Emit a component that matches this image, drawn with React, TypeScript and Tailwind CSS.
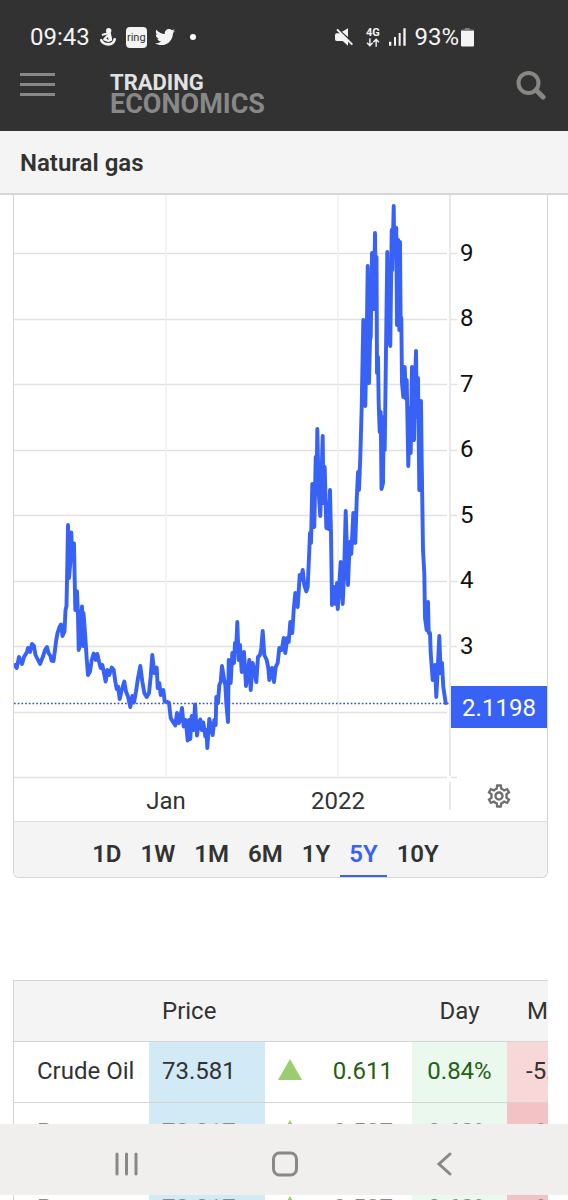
import { FaTwitter } from "react-icons/fa";
import { MdOutlineSettings } from "react-icons/md";

const priceTrace =
  "15,665 16.7,668 19,657 22,664 24,657 27,652 28,648 30,652 32,644 34,646 35.5,655 37.5,659 40,664 42,659 43.5,655 45,650 47,647 48.5,653 50.5,656 51.5,660.5 53.5,661 55,650 56,641.5 57.5,633 59.5,627 61,624.5 62.5,636 64.5,631.5 65.5,610 66.5,606 67.3,566 68,525 69,578 70.3,563 71.3,532.5 72.3,560 74,543.5 75.3,610 77,591.5 78,616 78.7,650 80,646 81,620 82,606.5 83.2,646 83.5,613 85.3,636.5 86.5,656 88,675 90,671.5 91.7,660 93.7,653.5 95.7,660 97.3,654 99,661.5 100.7,668 102.3,665 104,673 105.7,681.5 107.3,670 109.3,675 111.7,667.5 113.7,670 115.3,681.5 116.7,689 118,686.5 119.7,699 121.7,690 124.3,681.5 126,691.5 128,696.5 130.3,707 132.3,696 134,702.5 136,691.5 138,678 140.3,666 142.3,681.5 144.3,693 146.7,697 149,693 150.7,676.5 152.3,655 " +
  "154.3,673 156.7,667.5 157.7,688 159.3,683 160.7,695 163.3,690 164.7,701.5 167.3,702 169,703 170.7,718 172.7,721.5 175.3,725.5 177,713 179,723 180.3,718 182,708 183.7,726.5 185.7,720 187.7,740.5 189,720 190.3,739 191.7,716 193.7,730 195,704.5 197,735.5 198.7,723 200.3,719.5 201.7,730 203.3,722.5 205.3,736.5 206.3,730 207.3,748 209.3,719 211,727 212.7,735 214.3,720 215.7,725 216.3,697 218,703 219.3,685 220.7,682 222,666 223.7,677 225.3,685 226.3,703 228,722 228.7,660 230.7,683 232.3,653 234,663 235,643 236.3,645 237.3,622 238.7,660 240,645 241.7,672 244,652 246,686 247.7,673 249.3,660 250.7,690 252.7,663 254.7,672 256.3,682 258,657 260,655 261.3,648 262.7,631 264.3,655 266.7,660 268.3,668 269.3,680 272,668 274,682 275.7,667 277.7,663 279.3,648 281.7,650 283.7,638 285.3,653 287.3,638 288.7,642 290.3,622 292.3,633 293.7,610 295.3,593 297.7,607 299.7,575 301,580 302.7,570 304.3,585 " +
  "306.3,591.5 307.7,587 309,557 310,533 311,543 312.3,484 313.3,520 314.3,527 315.7,457 316.5,493 317.3,429 318.7,493 320.3,516 321.7,470 322.7,436 323.3,490 324,503 324.7,467 326.3,528 327.7,503 328.7,529 330,490 331,533 332,605 334,587 335.7,604 337,583 337.7,609 339,590 340.7,562 342.7,604 344,577 345.7,511 348,585 349.7,542 351.3,554 353.3,513 355.3,543 356.7,500 358,472 359,490 360.3,457 361.7,407 363.3,320 364.3,400 365.3,406 366.7,340 367.7,266 368.3,370 369,383 370,340 370.7,337 372,253 373.7,309 375,233 376,309 376.5,257 377,373 378,357 378.7,403 379.7,432 380.7,412 381.5,489 383,483 383.7,417 384.7,450 385.7,373 387.3,252 388.3,330 388.7,337 390.3,346 391.7,230 392.3,270 393.7,206 394.3,247 395,227 396,240 396.3,228 397,325 398.3,240 399.3,330 400,242 400.7,330 401.3,318 402,383 403.3,397 404.7,367 406,399 406.7,380 408.3,466 409.7,408 410.7,453 412,367 412.7,435 414,440 415,385 416,351 417,417 418,378 419.3,490 421,401 421.7,460 423,550 424.3,573 425,618 426.7,630 428,602 428.7,633 430,633 430.7,653 432.7,680 435,665 436.3,697 437.7,670 439.3,636 440.7,673 442,663 443.3,687 445.7,703";

const gridLines = [253, 319, 384, 450, 515, 581, 646, 712, 777];
const priceLabels = [
  { label: "9", y: 253 },
  { label: "8", y: 318 },
  { label: "7", y: 384 },
  { label: "6", y: 449 },
  { label: "5", y: 515 },
  { label: "4", y: 580 },
  { label: "3", y: 646 },
];
const ranges = ["1D", "1W", "1M", "6M", "1Y", "5Y", "10Y"];

function StatusBar() {
  return (
    <div className="flex h-[60px] items-end justify-between pr-[94px] pb-2 pl-[30px] text-2xl leading-[30px] text-[#f4f4f4]">
      <div className="flex items-center">
        <span>09:43</span>
        <svg viewBox="0 0 48 54" className="ml-[10px] h-[18px] w-4" fill="none" stroke="currentColor" strokeLinecap="round" strokeLinejoin="round" aria-hidden="true">
          <circle cx="26" cy="8" r="8" fill="currentColor" stroke="none" />
          <path d="M27 16q2 8 4 18" strokeWidth="11" />
          <path d="M24 16 8 20" strokeWidth="6" />
          <path d="M22 24 13 34l13 5" strokeWidth="7" />
          <path d="M4 37q5 12 21 12t19-15" strokeWidth="8" />
        </svg>
        <span className="ml-[10px] flex size-[21px] items-center justify-center rounded-[4px] bg-[#f4f4f4] text-[11px] leading-none text-[#323232]">ring</span>
        <FaTwitter className="ml-2 size-5" aria-hidden="true" />
        <span className="ml-[15px] size-[6px] rounded-full bg-white" />
      </div>
      <div className="flex items-center">
        <svg viewBox="0 0 54 54" className="size-[18px]" fill="currentColor" aria-hidden="true">
          <path d="M0 21q0-5 5-5h11l23 23v14L23 39H5q-5 0-5-5zM21 11 39 1v26z" />
          <path d="M6 4 52 50" stroke="currentColor" strokeWidth="6" />
        </svg>
        <span className="ml-3 flex w-[15px] flex-col items-center">
          <span className="text-[11px] leading-[10px] font-bold">4G</span>
          <svg viewBox="0 0 40 24" className="h-[9px] w-[14px]" fill="none" stroke="currentColor" strokeWidth="4" aria-hidden="true">
            <path d="M11 0v21M3 13l8 8 8-8M29 24V3M21 11l8-8 8 8" />
          </svg>
        </span>
        <svg viewBox="0 0 51 54" className="ml-[9px] h-[18px] w-[17px]" fill="currentColor" aria-hidden="true">
          <path d="M0 41h7v12H0zM15 27h6v26h-6zM29 15h6v38h-6zM43 1h7v52h-7z" />
        </svg>
        <span className="ml-2">93%</span>
        <svg viewBox="0 0 40 60" className="ml-[2px] h-5 w-[13px]" fill="currentColor" aria-hidden="true">
          <path d="M12 2h15v5h9q4 0 4 4H0q0-4 4-4h8z" opacity=".4" />
          <path d="M0 11h40v44q0 4-4 4H4q-4 0-4-4z" />
        </svg>
      </div>
    </div>
  );
}

function AppHeader() {
  return (
    <header className="shrink-0 bg-[#323232]">
      <StatusBar />
      <div className="flex h-[71px] items-start justify-between pr-[22px] pl-5">
        <div className="flex items-start">
          <button type="button" aria-label="Menu" className="mt-[13px] flex w-[35px] flex-col gap-[7px]">
            <span className="h-[3px] w-full bg-[#888]" />
            <span className="h-[3px] w-full bg-[#888]" />
            <span className="h-[3px] w-full bg-[#888]" />
          </button>
          <a href="#home" className="mt-3 ml-[55px] flex flex-col font-bold">
            <span className="text-[22px] leading-[22px] text-[#e2e2e2]">TRADING</span>
            <span className="text-[27px] leading-5 text-[#888]">ECONOMICS</span>
          </a>
        </div>
        <button type="button" aria-label="Search" className="mt-[10px] text-[#888883]">
          <svg viewBox="0 0 30 30" className="size-[30px]" fill="none" stroke="currentColor" aria-hidden="true">
            <circle cx="12.5" cy="13" r="10" strokeWidth="4" />
            <path d="m20 20 7 7" strokeWidth="5" strokeLinecap="round" />
          </svg>
        </button>
      </div>
    </header>
  );
}

function PriceChart() {
  return (
    <section className="mr-5 ml-[13px] shrink-0 rounded-b-md border-x border-b border-[#d4d4d4]">
      <div className="relative">
        <svg viewBox="14 195 533 626" className="block h-auto w-full" role="img" aria-label="Natural gas price, five years">
          <g stroke="#e1e1e1" strokeWidth="1.5">
            {gridLines.map((y) => (
              <path key={y} d={y === 712 ? `M14 ${y + 0.5}H447` : `M14 ${y + 0.5}H447M451 ${y + 0.5}H457`} />
            ))}
            <path d="M166 195V776M338 195V776" stroke="#efefef" />
            <path d="M450 195V776M450 782V810" />
          </g>
          <path d="M14 703.5H450" stroke="#2f52c4" strokeWidth="1.5" strokeDasharray="1.7 2" />
          <polyline points={priceTrace} fill="none" stroke="#3861f6" strokeWidth="3.9" strokeLinejoin="round" strokeLinecap="round" />
          <g fontSize="24" fill="#111">
            {priceLabels.map((p) => (
              <text key={p.label} x="460" y={p.y + 8}>{p.label}</text>
            ))}
          </g>
          <g fontSize="24" fill="#333" textAnchor="middle">
            <text x="166" y="809">Jan</text>
            <text x="338" y="809">2022</text>
          </g>
          <path d="M451 686H547V728H451z" fill="#3861f6" />
          <text x="499" y="716" fontSize="24" fill="#fff" textAnchor="middle">2.1198</text>
        </svg>
        <button type="button" aria-label="Chart settings" className="absolute right-[34px] bottom-[11px] text-[#6e6e6e]">
          <MdOutlineSettings className="size-7" />
        </button>
      </div>
      <div className="flex h-[56px] items-stretch justify-center gap-px rounded-b-md border-t border-[#dcdcdc] bg-[#f4f4f4] pr-[30px] text-2xl font-semibold text-[#323232]">
        {ranges.map((r) => (
          <button
            key={r}
            type="button"
            aria-pressed={r === "5Y"}
            className={r === "5Y" ? "border-b-2 border-[#3861f6] px-[9px] pt-[10px] text-[#3861f6]" : "border-b-2 border-transparent px-[9px] pt-[10px]"}
          >
            {r}
          </button>
        ))}
      </div>
    </section>
  );
}

type Quote = { name: string; price: string; change: string; day: string; month: string; monthClass: string; textClass: string; gainClass: string };

const crude: Quote = { name: "Crude Oil", price: "73.581", change: "0.611", day: "0.84%", month: "-5.21%", monthClass: "bg-[#f8d7d9]", textClass: "text-[#323232]", gainClass: "text-[#245f14]" };
const brent: Quote = { name: "Brent", price: "78.217", change: "0.527", day: "0.68%", month: "-6.11%", monthClass: "bg-[#f2c2c4]", textClass: "text-[#8a8a8a]", gainClass: "text-[#8a8a8a]" };

function QuoteRow({ quote }: { quote: Quote }) {
  return (
    <tr className={`h-[61px] border-b border-[#d4d4d4] ${quote.textClass}`}>
      <td className="pb-[3px] pl-[23px]">{quote.name}</td>
      <td className="bg-[#d2e9f6] pb-[3px] pl-[13px]">{quote.price}</td>
      <td className="pb-[5px] pl-[13px]">
        <svg viewBox="0 0 24 21" className="h-[21px] w-6" aria-label="Up" role="img">
          <path d="M12 0 24 21H0z" fill="#9bcc70" />
        </svg>
      </td>
      <td className={`pr-[19px] pb-[3px] text-right ${quote.gainClass}`}>{quote.change}</td>
      <td className={`bg-[#ebf8ee] pb-[3px] text-center ${quote.gainClass}`}>{quote.day}</td>
      <td className={`pb-[3px] pl-[19px] ${quote.monthClass}`}>{quote.month}</td>
    </tr>
  );
}

function Columns() {
  return (
    <colgroup>
      <col className="w-[135px]" />
      <col className="w-[116px]" />
      <col className="w-[50px]" />
      <col className="w-[97px]" />
      <col className="w-[95px]" />
      <col className="w-[110px]" />
    </colgroup>
  );
}

function QuoteTable() {
  return (
    <div className="mt-[102px] mr-5 ml-[13px] shrink-0 overflow-hidden border-l border-[#d4d4d4]">
      <table className="w-[603px] table-fixed border-collapse text-2xl">
        <Columns />
        <thead>
          <tr className="h-[61px] border-y border-[#d4d4d4] bg-[#f4f4f4] text-[#323232]">
            <th />
            <th className="pb-px pl-[13px] text-left font-normal">Price</th>
            <th />
            <th />
            <th className="pb-px text-center font-normal">Day</th>
            <th className="pb-px pl-5 text-left font-normal">Month</th>
          </tr>
        </thead>
        <tbody>
          <QuoteRow quote={crude} />
          <QuoteRow quote={brent} />
        </tbody>
      </table>
    </div>
  );
}

function NavigationBar() {
  return (
    <nav className="flex h-[71px] shrink-0 items-center justify-center gap-[133px] bg-[#f0efee] pt-2 pl-[2px] text-[#888]">
      <button type="button" aria-label="Recent apps">
        <svg viewBox="0 0 26 26" className="size-[26px]" stroke="currentColor" strokeWidth="3" strokeLinecap="round" aria-hidden="true">
          <path d="M4 3v20M13.5 3v20M23 3v20" />
        </svg>
      </button>
      <button type="button" aria-label="Home">
        <svg viewBox="0 0 26 26" className="size-[26px]" fill="none" stroke="currentColor" strokeWidth="3" aria-hidden="true">
          <rect x="1.5" y="2" width="23" height="22" rx="6" />
        </svg>
      </button>
      <button type="button" aria-label="Back">
        <svg viewBox="0 0 26 26" className="size-[26px]" fill="none" stroke="currentColor" strokeWidth="3" strokeLinecap="round" aria-hidden="true">
          <path d="M19 3 8 13l11 10" />
        </svg>
      </button>
    </nav>
  );
}

export default function App() {
  return (
    <div className="flex h-screen w-full flex-col overflow-hidden bg-white font-[Roboto,sans-serif]">
      <AppHeader />
      <h1 className="flex h-16 shrink-0 items-center border-b-2 border-[#d6d6d6] bg-[#f4f4f4] pt-px pl-5 text-2xl font-semibold text-[#323232]">Natural gas</h1>
      <main className="flex min-h-0 flex-1 flex-col overflow-hidden">
        <PriceChart />
        <QuoteTable />
      </main>
      <NavigationBar />
      <div className="mr-5 ml-[13px] flex h-[5px] shrink-0 items-start overflow-hidden border-l border-[#d4d4d4]" aria-hidden="true">
        <table className="-mt-4 w-[603px] shrink-0 table-fixed border-collapse text-2xl">
          <Columns />
          <tbody>
            <QuoteRow quote={brent} />
          </tbody>
        </table>
      </div>
    </div>
  );
}
